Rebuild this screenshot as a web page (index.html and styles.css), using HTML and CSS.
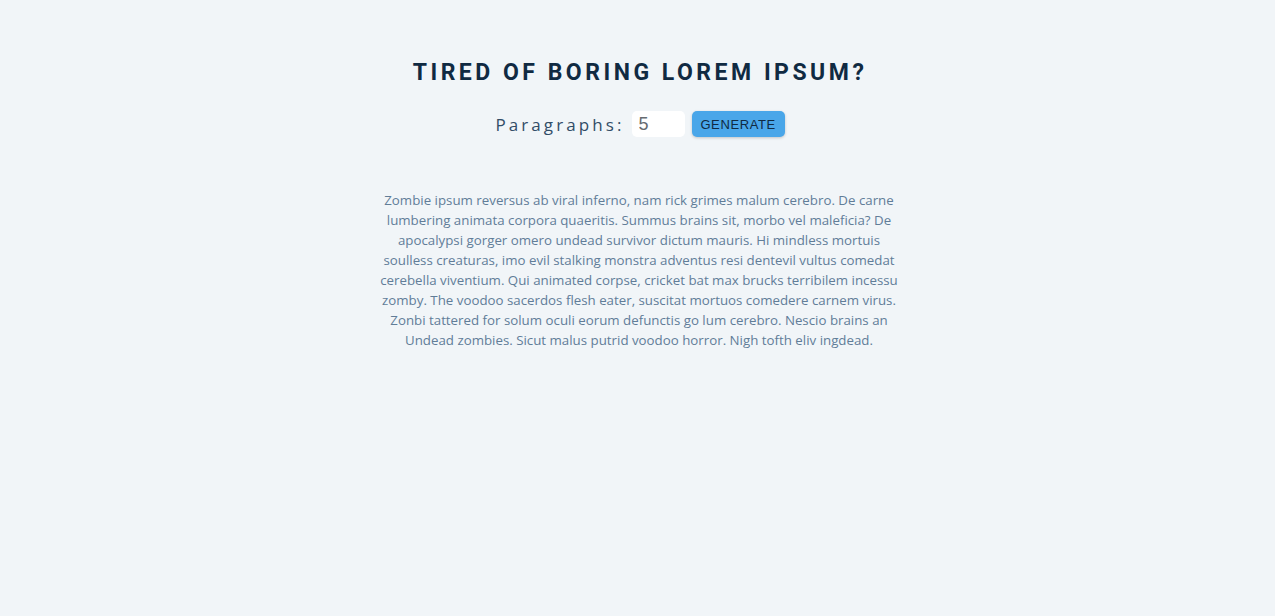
FILE: index.html
```html
<!DOCTYPE html>
<html lang="en">
<head>
<meta charset="utf-8">
<title>Lorem Ipsum Generator</title>
<link rel="stylesheet" href="styles.css">
</head>
<body>
<section class="section-center">
  <h3 class="title">Tired of boring lorem ipsum?</h3>
  <form class="lorem-form">
    <label class="label" for="amount">Paragraphs:</label>
    <input class="amount" type="number" id="amount" name="amount" value="5">
    <button class="btn" type="button">Generate</button>
  </form>
  <article class="lorem-text">
    <p>Zombie ipsum reversus ab viral inferno, nam rick grimes malum cerebro. De carne lumbering animata corpora quaeritis. Summus brains sit, morbo vel maleficia? De apocalypsi gorger omero undead survivor dictum mauris. Hi mindless mortuis soulless creaturas, imo evil stalking monstra adventus resi dentevil vultus comedat cerebella viventium. Qui animated corpse, cricket bat max brucks terribilem incessu zomby. The voodoo sacerdos flesh eater, suscitat mortuos comedere carnem virus. Zonbi tattered for solum oculi eorum defunctis go lum cerebro. Nescio brains an Undead zombies. Sicut malus putrid voodoo horror. Nigh tofth eliv ingdead.</p>
  </article>
</section>
</body>
</html>
```

FILE: styles.css
```css
* {
  margin: 0;
  padding: 0;
  box-sizing: border-box;
}

body {
  background: #f1f5f8;
  color: #102a42;
  font-family: "Open Sans", sans-serif;
}

.section-center {
  width: 90vw;
  max-width: 526px;
  margin: 0 auto;
  padding-top: 59px;
  text-align: center;
}

.title {
  font-family: Roboto, sans-serif;
  font-size: 23px;
  font-weight: 700;
  line-height: 28px;
  letter-spacing: 3.5px;
  text-transform: uppercase;
  color: #102a42;
  padding-left: 5px;
}

.lorem-form {
  display: flex;
  justify-content: center;
  align-items: center;
  margin-top: 24px;
  padding-left: 5px;
}

.label {
  font-family: "Open Sans", sans-serif;
  font-size: 17px;
  letter-spacing: 3.1px;
  color: #324d67;
  margin-right: 7px;
}

.amount {
  width: 53px;
  height: 26px;
  border: none;
  border-radius: 5px;
  background: #fff;
  padding: 0 7px;
  font-family: "Liberation Sans", Arial, sans-serif;
  font-size: 18px;
  color: #666b70;
  margin-right: 7px;
  -moz-appearance: textfield;
  appearance: textfield;
  outline: none;
}

.amount::-webkit-inner-spin-button,
.amount::-webkit-outer-spin-button {
  -webkit-appearance: none;
  margin: 0;
}

.btn {
  width: 93px;
  height: 26px;
  border: none;
  border-radius: 5px;
  background: #49a6e9;
  color: #102a42;
  font-family: "Liberation Sans", Arial, sans-serif;
  font-size: 13px;
  letter-spacing: 0.6px;
  text-transform: uppercase;
  box-shadow: 0 1px 3px rgba(0, 0, 0, 0.2);
  cursor: pointer;
}

.lorem-text {
  margin-top: 53px;
  padding-left: 3px;
}

.lorem-text p {
  font-size: 13.3px;
  line-height: 20px;
  color: #617d98;
}
```
